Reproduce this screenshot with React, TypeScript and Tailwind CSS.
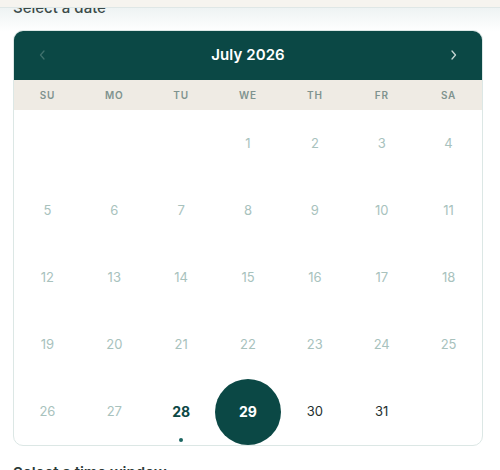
import React from "react";

const DAYS = ["SU", "MO", "TU", "WE", "TH", "FR", "SA"];

type Cell = { day: number | null };

function buildCells(): Cell[] {
  const cells: Cell[] = [];
  // July 2026 starts on a Wednesday
  for (let i = 0; i < 3; i++) cells.push({ day: null });
  for (let d = 1; d <= 31; d++) cells.push({ day: d });
  while (cells.length % 7 !== 0) cells.push({ day: null });
  return cells;
}

const TODAY = 28;
const SELECTED = 29;

export default function App() {
  const cells = buildCells();

  return (
    <div
      className="relative w-[500px] h-[470px] overflow-hidden bg-white"
      style={{ fontFamily: "Inter, 'Noto Sans', sans-serif" }}
    >
      {/* sticky header strip over the content */}
      <div className="absolute top-0 left-0 right-0 z-10 h-[8px] bg-[#f6f4ef] border-b border-[#dfe7e6]" />
      {/* soft shadow under the sticky header, behind the text */}
      <div className="absolute top-[8px] left-0 right-0 h-[24px] bg-gradient-to-b from-[#eef3f3] to-white" />

      <div className="relative px-[13px]">
        <p className="-mt-[2px] text-[15px] leading-[20px] font-medium text-[#3b4a48]">
          Select a date
        </p>

        <div className="mt-[12px] w-[470px] rounded-[10px] border border-[#dce7e5] overflow-hidden bg-white">
          <div className="h-[50px] bg-[#0b4845] flex items-center justify-between px-[24px] -mx-px -mt-px">
            <button className="w-[10px] flex justify-center text-[#3f706c]">
              <svg width="6" height="10" viewBox="0 0 6 10" fill="none">
                <path d="M5 1L1.5 5L5 9" stroke="currentColor" strokeWidth="1.3" strokeLinecap="round" strokeLinejoin="round" />
              </svg>
            </button>
            <div className="text-white text-[15px] font-semibold tracking-[0.1px]">July 2026</div>
            <button className="w-[10px] flex justify-center text-[#c5d6d4]">
              <svg width="6" height="10" viewBox="0 0 6 10" fill="none">
                <path d="M1 1L4.5 5L1 9" stroke="currentColor" strokeWidth="1.3" strokeLinecap="round" strokeLinejoin="round" />
              </svg>
            </button>
          </div>

          <div className="h-[30px] bg-[#efebe4] grid grid-cols-7 items-center">
            {DAYS.map((d) => (
              <div key={d} className="text-center text-[10px] font-semibold tracking-[0.8px] text-[#7f938f]">
                {d}
              </div>
            ))}
          </div>

          <div className="grid grid-cols-7 auto-rows-[67px]">
            {cells.map((c, i) => {
              if (c.day === null) return <div key={i} />;
              if (c.day === SELECTED) {
                return (
                  <div key={i} className="flex items-center justify-center">
                    <div className="w-[66px] h-[66px] rounded-full bg-[#0b4845] flex items-center justify-center text-white text-[14px] font-bold">
                      {c.day}
                    </div>
                  </div>
                );
              }
              if (c.day === TODAY) {
                return (
                  <div key={i} className="relative flex items-center justify-center text-[14px] font-bold text-[#0b4845]">
                    {c.day}
                    <span className="absolute bottom-[3px] left-1/2 -translate-x-1/2 w-[4px] h-[4px] rounded-full bg-[#1c6662]" />
                  </div>
                );
              }
              const past = c.day < TODAY;
              return (
                <div
                  key={i}
                  className={`flex items-center justify-center text-[13px] ${
                    past ? "text-[#a8c2bd]" : "text-[#25302f]"
                  }`}
                >
                  {c.day}
                </div>
              );
            })}
          </div>
        </div>

        <p className="mt-[17px] text-[15px] leading-[20px] font-semibold text-[#2c3a38]">
          Select a time window
        </p>
      </div>
    </div>
  );
}
